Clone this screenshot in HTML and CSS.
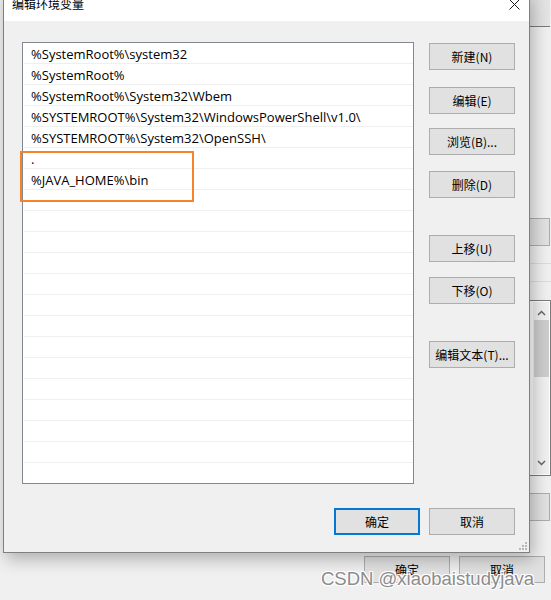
FILE: index.html
```html
<!DOCTYPE html>
<html lang="zh-CN">
<head>
<meta charset="utf-8">
<title>编辑环境变量</title>
<link rel="stylesheet" href="styles.css">
</head>
<body>
<div class="desk">
  <div class="bg-list-top"></div>
  <div class="bg-btn bg-btn-a"></div>
  <div class="bg-line bg-line-a"></div>
  <div class="bg-line bg-line-b"></div>
  <div class="bg-list-bottom">
    <div class="bg-scroll">
      <svg class="chev" width="9" height="6" viewBox="0 0 9 6"><path d="M1 5 L4.5 1.5 L8 5" fill="none" stroke="#606060" stroke-width="1.4"/></svg>
      <div class="thumb"></div>
      <div class="track"></div>
      <svg class="chev" width="9" height="6" viewBox="0 0 9 6"><path d="M1 1 L4.5 4.5 L8 1" fill="none" stroke="#606060" stroke-width="1.4"/></svg>
    </div>
  </div>
  <div class="bg-btn bg-btn-b"></div>
  <div class="bg-footer">
    <div class="btn">确定</div>
    <div class="btn">取消</div>
  </div>

  <div class="dialog">
    <div class="titlebar">
      <span class="title">编辑环境变量</span>
      <svg class="close" width="11" height="11" viewBox="0 0 11 11"><path d="M0.5 0.5 L10.5 10.5 M10.5 0.5 L0.5 10.5" stroke="#1a1a1a" stroke-width="1"/></svg>
    </div>
    <div class="dbody">
      <div class="main">
        <div class="listbox">
          <div class="row">%SystemRoot%\system32</div>
          <div class="row">%SystemRoot%</div>
          <div class="row">%SystemRoot%\System32\Wbem</div>
          <div class="row">%SYSTEMROOT%\System32\WindowsPowerShell\v1.0\</div>
          <div class="row">%SYSTEMROOT%\System32\OpenSSH\</div>
          <div class="row">.</div>
          <div class="row">%JAVA_HOME%\bin</div>
          <div class="row"></div>
          <div class="row"></div>
          <div class="row"></div>
          <div class="row"></div>
          <div class="row"></div>
          <div class="row"></div>
          <div class="row"></div>
          <div class="row"></div>
          <div class="row"></div>
          <div class="row"></div>
          <div class="row"></div>
          <div class="row"></div>
          <div class="row"></div>
          <div class="row"></div>
        </div>
        <div class="side">
          <div class="btn g1">新建(N)</div>
          <div class="btn g2">编辑(E)</div>
          <div class="btn g3">浏览(B)...</div>
          <div class="btn g4">删除(D)</div>
          <div class="btn g5">上移(U)</div>
          <div class="btn g6">下移(O)</div>
          <div class="btn g7">编辑文本(T)...</div>
        </div>
      </div>
      <div class="footer">
        <div class="btn primary">确定</div>
        <div class="btn">取消</div>
      </div>
      <svg class="grip" width="9" height="9" viewBox="0 0 9 9">
        <rect x="7" y="1" width="2" height="2" fill="#b8b8b8"/>
        <rect x="4" y="4" width="2" height="2" fill="#b8b8b8"/>
        <rect x="7" y="4" width="2" height="2" fill="#b8b8b8"/>
        <rect x="1" y="7" width="2" height="2" fill="#b8b8b8"/>
        <rect x="4" y="7" width="2" height="2" fill="#b8b8b8"/>
        <rect x="7" y="7" width="2" height="2" fill="#b8b8b8"/>
      </svg>
    </div>
  </div>

  <div class="highlight"></div>
  <div class="watermark">CSDN @xiaobaistudyjava</div>
</div>
</body>
</html>
```

FILE: styles.css
```css
html, body {
  margin: 0;
  padding: 0;
}
body {
  background: #f0f0f0;
  font-family: "Open Sans", "Noto Sans CJK SC", sans-serif;
  font-size: 12px;
  color: #000;
}
.desk {
  position: relative;
  width: 551px;
  height: 600px;
  overflow: hidden;
  background: #f0f0f0;
}

/* background window pieces */
.bg-list-top {
  position: absolute;
  left: 470px;
  top: -2px;
  width: 80px;
  height: 28px;
  background: #e4e4e4;
  border-bottom: 1px solid #7a7a7a;
}
.bg-btn {
  position: absolute;
  left: 460px;
  width: 88px;
  height: 26px;
  background: #e1e1e1;
  border: 1px solid #adadad;
}
.bg-btn-a { top: 218px; }
.bg-btn-b { top: 493px; }
.bg-line {
  position: absolute;
  left: 460px;
  width: 91px;
  height: 1px;
  background: #dcdcdc;
}
.bg-line-a { top: 263px; }
.bg-line-b { top: 281px; }
.bg-list-bottom {
  position: absolute;
  left: 460px;
  top: 300px;
  width: 89px;
  height: 174px;
  border: 1px solid #7a7a7a;
  background: #fff;
  display: flex;
  justify-content: flex-end;
}
.bg-scroll {
  width: 16px;
  margin: 1px 1px 1px 0;
  background: #f0f0f0;
  display: flex;
  flex-direction: column;
  align-items: center;
}
.bg-scroll .chev { margin: 8px 0 4px; flex: none; }
.bg-scroll .thumb {
  width: 15px;
  height: 57px;
  background: #cdcdcd;
  flex: none;
}
.bg-scroll .track { flex: 1; }
.bg-scroll .chev:last-child { margin: 4px 0 8px; }
.bg-footer {
  position: absolute;
  left: 364px;
  top: 556px;
  display: flex;
  gap: 9px;
}
.bg-footer .btn { width: 86px; height: 27px; }

/* dialog */
.dialog {
  position: absolute;
  left: 3px;
  top: -10px;
  width: 527px;
  height: 563px;
  box-sizing: border-box;
  border: 1px solid #7f7f7f;
  background: #f0f0f0;
  box-shadow: 3px 6px 16px rgba(0, 0, 0, 0.28);
  display: flex;
  flex-direction: column;
}
.titlebar {
  height: 30px;
  background: #fff;
  display: flex;
  align-items: flex-start;
  padding: 5px 9px 0 8px;
  box-sizing: border-box;
  flex: none;
}
.title {
  font-family: "Noto Sans CJK SC", sans-serif;
  font-size: 12px;
  line-height: 16px;
  color: #000;
}
.close {
  margin-left: auto;
  margin-top: 3px;
}
.dbody {
  position: relative;
  flex: 1;
  padding: 21px 14px 17px 18px;
  display: flex;
  flex-direction: column;
}
.main {
  display: flex;
  gap: 15px;
  align-items: flex-start;
}
.listbox {
  width: 392px;
  height: 442px;
  box-sizing: border-box;
  border: 1px solid #828790;
  background: #fff;
  overflow: hidden;
  flex: none;
}
.row {
  height: 17px;
  padding-top: 3px;
  line-height: 17px;
  margin: 0 0 0 1px;
  border-bottom: 1px solid #efefef;
  padding-left: 7px;
  white-space: nowrap;
  font-size: 13px;
  color: #000;
}
.side {
  display: flex;
  flex-direction: column;
  width: 86px;
}
.btn {
  box-sizing: border-box;
  width: 86px;
  height: 27px;
  background: #e1e1e1;
  border: 1px solid #adadad;
  display: flex;
  align-items: center;
  justify-content: center;
  font-family: "Noto Sans CJK SC", sans-serif;
  font-size: 12px;
  color: #000;
  white-space: nowrap;
}
.g1 { margin-top: 1px; }
.g2 { margin-top: 17px; }
.g3 { margin-top: 14px; }
.g4 { margin-top: 16px; }
.g5 { margin-top: 37px; }
.g6 { margin-top: 15px; }
.g7 { margin-top: 37px; }
.footer {
  margin-top: 24px;
  display: flex;
  justify-content: flex-end;
  gap: 9px;
}
.btn.primary {
  border: 2px solid #0078d7;
}
.grip {
  position: absolute;
  right: 2px;
  bottom: 2px;
}

/* annotation overlay */
.highlight {
  position: absolute;
  left: 20px;
  top: 151px;
  width: 174px;
  height: 51px;
  box-sizing: border-box;
  border: 2px solid #f5852c;
}
.watermark {
  position: absolute;
  left: 321px;
  top: 567px;
  font-family: "Liberation Sans", sans-serif;
  font-size: 18.5px;
  line-height: 24px;
  color: #8c8c8c;
  text-shadow: 1px 1px 0 #fff, -1px -1px 0 #fff, 1px -1px 0 #fff, -1px 1px 0 #fff;
  white-space: nowrap;
}
```
